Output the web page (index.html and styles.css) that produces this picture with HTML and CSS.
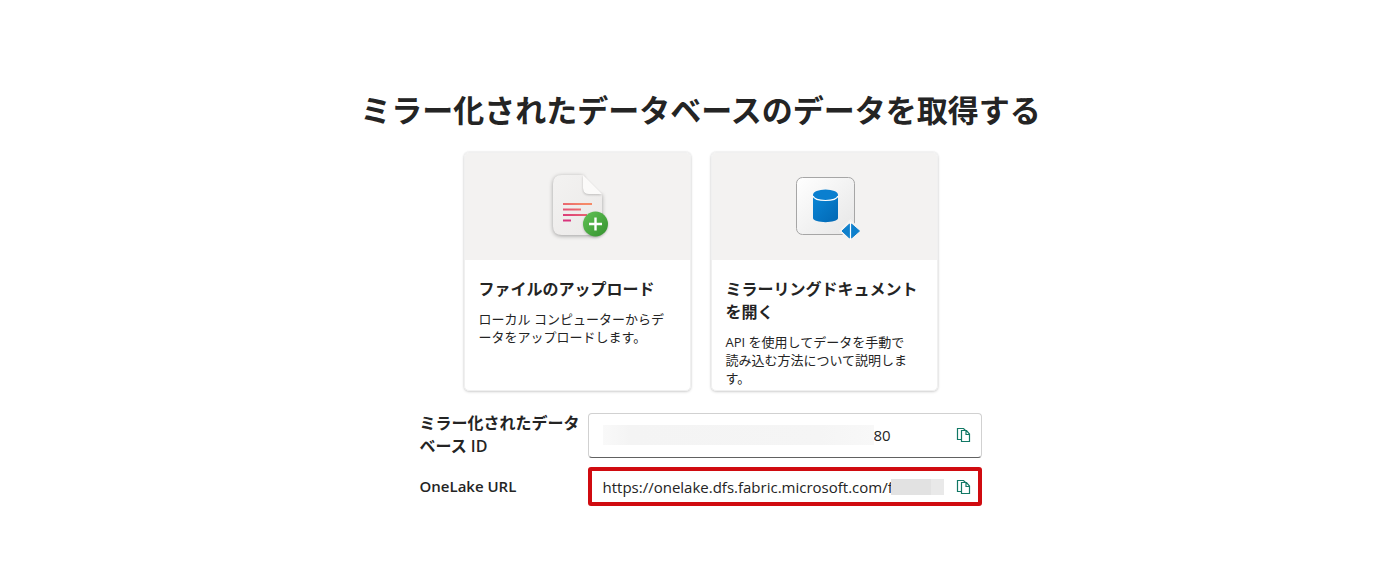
FILE: index.html
```html
<!DOCTYPE html>
<html lang="ja">
<head>
    <meta charset="UTF-8">
    <meta name="viewport" content="width=device-width, initial-scale=1.0">
    <title>ミラー化されたデータベース</title>
    <link rel="stylesheet" href="styles.css">
</head>
<body>
    <main class="page">
        <h1 class="page-title">ミラー化されたデータベースのデータを取得する</h1>

        <div class="cards">
            <a class="card" href="#upload">
                <div class="card-thumb">
                    <svg class="file-icon" width="80" height="80" viewBox="-3 0 80 80" aria-hidden="true">
                        <defs>
                            <linearGradient id="paper" x1="0" y1="0" x2="1" y2="1">
                                <stop offset="0" stop-color="#f3f2f1"/>
                                <stop offset="1" stop-color="#ebe9e8"/>
                            </linearGradient>
                            <linearGradient id="lines" gradientUnits="userSpaceOnUse" x1="40" y1="37" x2="32" y2="56">
                                <stop offset="0" stop-color="#f58a68"/>
                                <stop offset="1" stop-color="#d9347c"/>
                            </linearGradient>
                            <linearGradient id="plus" x1="0" y1="0" x2="1" y2="1">
                                <stop offset="0" stop-color="#62c255"/>
                                <stop offset="1" stop-color="#34922f"/>
                            </linearGradient>
                        </defs>
                        <path class="file-paper" d="M22 10H43V23Q43 29 49 29H62V63Q62 70 55 70H22Q13 70 13 61V19Q13 10 22 10Z" fill="url(#paper)"/>
                        <path class="file-fold" d="M43 10L62 29H49Q43 29 43 23Z" fill="#fbfaf9"/>
                        <path d="M23 39H52M23 44.500H41M23 50H47M23 55.500H31" stroke="url(#lines)" stroke-width="2"/>
                        <circle class="file-plus" cx="55.500" cy="59" r="12.500" fill="url(#plus)"/>
                        <path d="M55.500 52.500V65.500M49 59H62" stroke="#fff" stroke-width="2.400"/>
                    </svg>
                </div>
                <div class="card-body">
                    <h2 class="card-title">ファイルのアップロード</h2>
                    <p class="card-text">ローカル コンピューターからデータをアップロードします。</p>
                </div>
            </a>
            <a class="card" href="#docs">
                <div class="card-thumb">
                    <svg width="80" height="80" viewBox="-1 0 80 80" aria-hidden="true">
                        <defs>
                            <linearGradient id="tile" x1="0" y1="0" x2="1" y2="1">
                                <stop offset="0" stop-color="#fff"/>
                                <stop offset="1" stop-color="#e6e6e6"/>
                            </linearGradient>
                            <linearGradient id="db" x1="0" y1="0" x2="1" y2="1">
                                <stop offset="0" stop-color="#0a86d6"/>
                                <stop offset="1" stop-color="#0268b4"/>
                            </linearGradient>
                        </defs>
                        <rect x="11.500" y="12.500" width="58" height="57" rx="6" fill="url(#tile)" stroke="#a6a6a6"/>
                        <path d="M28 30V53C28 58.500 53 58.500 53 53V30Z" fill="url(#db)"/>
                        <ellipse cx="40.500" cy="30" rx="12.500" ry="5.500" fill="#0a7fcf"/>
                        <path d="M28 31C30 37 51 37 53 31" fill="none" stroke="#fff" stroke-width="1.200"/>
                        <path d="M65.500 54L77 66L65.500 77L54 66Z" fill="#f3f2f1"/>
                        <path d="M64.500 59V73L57 66ZM66.500 59V73L74.500 66Z" fill="#0f80cc" stroke="#0f80cc" stroke-width="1"/>
                        <path d="M65.500 57V75" stroke="#fff" stroke-width="1.200"/>
                    </svg>
                </div>
                <div class="card-body">
                    <h2 class="card-title">ミラーリングドキュメントを開く</h2>
                    <p class="card-text">API を使用してデータを手動で読み込む方法について説明します。</p>
                </div>
            </a>
        </div>

        <form class="details">
            <label class="label" for="database-id">ミラー化されたデータベース ID</label>
            <div class="field">
                <span class="mask mask-id"></span>
                <input class="field-input" id="database-id" type="text" value="80" readonly>
                <button class="copy" type="button" aria-label="ID をコピー">
                    <svg width="16" height="16" viewBox="0 0 16 16" aria-hidden="true">
                        <path d="M5 12.500H1.500V1.500H7.500L9.500 3.500"/>
                        <path d="M5.500 3.500H10.500L13.500 7V14.500H5.500ZM10 3.500V7.500H13.500"/>
                    </svg>
                </button>
            </div>

            <label class="label label-latin" for="onelake-url">OneLake URL</label>
            <div class="field field-marked">
                <input class="field-input field-url" id="onelake-url" type="text" value="https://onelake.dfs.fabric.microsoft.com/f" readonly>
                <span class="mask-url"></span>
                <button class="copy" type="button" aria-label="URL をコピー">
                    <svg width="16" height="16" viewBox="0 0 16 16" aria-hidden="true">
                        <path d="M5 12.500H1.500V1.500H7.500L9.500 3.500"/>
                        <path d="M5.500 3.500H10.500L13.500 7V14.500H5.500ZM10 3.500V7.500H13.500"/>
                    </svg>
                </button>
            </div>
        </form>
    </main>
</body>
</html>
```
FILE: styles.css
```css
*{
    margin: 0;
    padding: 0;
    box-sizing: border-box;
}

body{
    background: #fff;
    color: #242424;
    font-family: "Open Sans", "Noto Sans CJK JP", sans-serif;
    font-size: 16px;
}

.page{
    display: flex;
    flex-direction: column;
    align-items: center;
    padding: 87px 0 40px 20px;
}

.page-title{
    font-size: 31px;
    line-height: 46px;
    font-weight: 700;
}

.cards{
    display: grid;
    grid-template-columns: 1fr 1fr;
    gap: 20px;
    width: 100%;
    max-width: 474px;
    margin-top: 19px;
}

.card{
    overflow: hidden;
    border: 1px solid #f0f0f0;
    border-radius: 5px;
    box-shadow: 0 0 2px rgba(0,0,0,.12), 0 1px 3px rgba(0,0,0,.16);
    color: inherit;
    text-decoration: none;
}

.card-thumb{
    display: flex;
    justify-content: center;
    align-items: center;
    height: 107px;
    padding-bottom: 4px;
    background: #f3f2f1;
}

.file-paper{
    filter: drop-shadow(0 1px 2px rgba(0,0,0,.35));
}

.file-fold,
.file-plus{
    filter: drop-shadow(0 1px 1px rgba(0,0,0,.2));
}

.card-body{
    padding: 18px 22px 3px 14px;
}

.card-title{
    margin-right: -8px;
    font-size: 16px;
    line-height: 23px;
    font-weight: 700;
}

.card-text{
    margin-top: 9px;
    font-size: 13px;
    line-height: 18px;
    line-break: loose;
}

.details{
    display: grid;
    grid-template-columns: 160px minmax(0, 1fr);
    align-items: center;
    gap: 9px 8px;
    width: 100%;
    max-width: 562px;
    margin-top: 21px;
}

.label{
    font-size: 16px;
    line-height: 23px;
    font-weight: 600;
}

.label-latin{
    font-size: 15px;
}

.field{
    display: flex;
    align-items: center;
    height: 45px;
    padding: 0 9px 0 14px;
    border: 1px solid #d1d1d1;
    border-bottom-color: #616161;
    border-radius: 4px;
}

.field-marked{
    height: 39px;
    padding: 0 6px 0 11px;
    border: 4px solid #d00b10;
    border-radius: 3px;
}

.field-input{
    flex: 1;
    min-width: 0;
    border: 0;
    outline: 0;
    background: none;
    color: inherit;
    font-family: inherit;
    font-size: 15px;
}

.field-url{
    flex: 0 1 288px;
}

.mask-id{
    width: 271px;
    height: 20px;
    background: linear-gradient(90deg, #f9f9f9, #f4f4f4 10%, #f5f5f5 80%, #f8f8f8);
}

.mask-url{
    width: 53px;
    height: 16px;
    background: linear-gradient(90deg, #e2e2e2 75%, #e9e9e9 75%);
}

.copy{
    display: flex;
    margin-left: auto;
    border: 0;
    background: none;
    cursor: pointer;
}

.copy svg{
    fill: none;
    stroke: #117865;
    stroke-width: 1.2;
}
```
